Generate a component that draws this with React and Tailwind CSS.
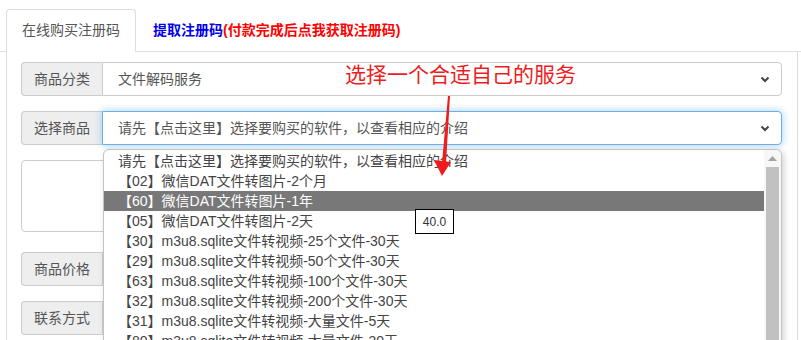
import React from 'react';

const font = { fontFamily: '"Liberation Sans", "Noto Sans CJK SC", sans-serif' };

const options = [
  '请先【点击这里】选择要购买的软件，以查看相应的介绍',
  '【02】微信DAT文件转图片-2个月',
  '【60】微信DAT文件转图片-1年',
  '【05】微信DAT文件转图片-2天',
  '【30】m3u8.sqlite文件转视频-25个文件-30天',
  '【29】m3u8.sqlite文件转视频-50个文件-30天',
  '【63】m3u8.sqlite文件转视频-100个文件-30天',
  '【32】m3u8.sqlite文件转视频-200个文件-30天',
  '【31】m3u8.sqlite文件转视频-大量文件-5天',
  '【80】m3u8.sqlite文件转视频-大量文件-30天',
];

const Chevron = () => (
  <svg width="10" height="7" viewBox="0 0 10 7" className="shrink-0">
    <polyline points="1.5,1.5 5,5 8.5,1.5" fill="none" stroke="#444" strokeWidth="2" />
  </svg>
);

const Addon = ({ children }) => (
  <div className="w-[81px] shrink-0 flex items-center justify-center bg-[#eeeeee] border border-[#cccccc] border-r-0 rounded-l-[4px] text-[14px] text-[#555]">
    {children}
  </div>
);

const SelectRow = ({ label, value, focused }) => (
  <div className="flex h-[34px]">
    <Addon>{label}</Addon>
    <div
      className={
        focused
          ? 'flex-1 flex items-center justify-between pl-[15px] pr-[11px] border border-[#66afe9] rounded-r-[4px] bg-white text-[14px] text-[#555] shadow-[0_0_8px_rgba(102,175,233,0.6)]'
          : 'flex-1 flex items-center justify-between pl-[15px] pr-[11px] border border-[#cccccc] rounded-r-[4px] bg-white text-[14px] text-[#555]'
      }
    >
      <span>{value}</span>
      <Chevron />
    </div>
  </div>
);

const InputRow = ({ label }) => (
  <div className="flex h-[34px]">
    <Addon>{label}</Addon>
    <div className="flex-1 border border-[#cccccc] rounded-r-[4px] bg-white" />
  </div>
);

export default function App() {
  return (
    <div className="relative w-[801px] h-[340px] overflow-hidden bg-white" style={font}>
      {/* tabs */}
      <div className="flex items-end pl-[6px] pt-[9px] border-b border-[#dddddd]">
        <div className="h-[43px] -mb-px px-[15px] flex items-center border border-[#dddddd] border-b-white rounded-t-[4px] bg-white text-[14px] text-[#555]">
          在线购买注册码
        </div>
        <div className="h-[42px] ml-[2px] px-[15px] flex items-center text-[14px] font-bold">
          <span className="text-[#0000ee]">提取注册码</span>
          <span className="text-[#ff0000]">(付款完成后点我获取注册码)</span>
        </div>
      </div>

      {/* panel */}
      <div className="ml-[6px] w-[792px] border-x border-[#dddddd] pl-[14px] pr-[15px] pt-[10px] pb-4">
        <div className="flex flex-col gap-[15px]">
          <SelectRow label="商品分类" value="文件解码服务" />
          <SelectRow label="选择商品" value="请先【点击这里】选择要购买的软件，以查看相应的介绍" focused />
          <div className="h-[72px] mb-[5px] border border-[#cccccc] rounded-[4px] bg-white" />
          <InputRow label="商品价格" />
          <InputRow label="联系方式" />
        </div>
      </div>

      {/* native dropdown list */}
      <div className="absolute left-[103px] top-[149px] w-[679px] h-[220px] flex border border-[#c4c4c4] rounded-t-[6px] bg-white shadow-[2px_2px_6px_rgba(0,0,0,0.18)]">
        <div className="flex-1 pt-px">
          {options.map((o, i) => (
            <div
              key={o}
              className={
                i === 2
                  ? 'h-[20px] flex items-center pl-[14px] text-[14px] bg-[#787878] text-white'
                  : 'h-[20px] flex items-center pl-[14px] text-[14px] text-[#444]'
              }
            >
              {o}
            </div>
          ))}
        </div>
        <div className="w-[17px] flex flex-col items-center bg-[#f7f7f7] rounded-tr-[6px]">
          <svg width="9" height="5" viewBox="0 0 9 5" className="mt-[6px]">
            <polygon points="0,5 4.5,0 9,5" fill="#a3a3a3" />
          </svg>
          <div className="mt-[6px] w-[13px] flex-1 bg-[#c1c1c1]" />
        </div>
      </div>

      {/* value tooltip */}
      <div className="absolute left-[415px] top-[209px] w-[39px] h-[25px] flex items-center justify-center border border-black bg-white text-[12px] text-[#333]">
        40.0
      </div>

      {/* annotation */}
      <div className="absolute left-[345px] top-[61px] text-[21px] leading-[28px] text-[#ee1c1c]">
        选择一个合适自己的服务
      </div>
      <svg className="absolute left-0 top-0" width="801" height="340">
        <polygon points="448,96 450,96 446,163 442,163" fill="#ee1c1c" />
        <polygon points="434,160 451,162 442,176" fill="#ee1c1c" />
      </svg>
    </div>
  );
}
